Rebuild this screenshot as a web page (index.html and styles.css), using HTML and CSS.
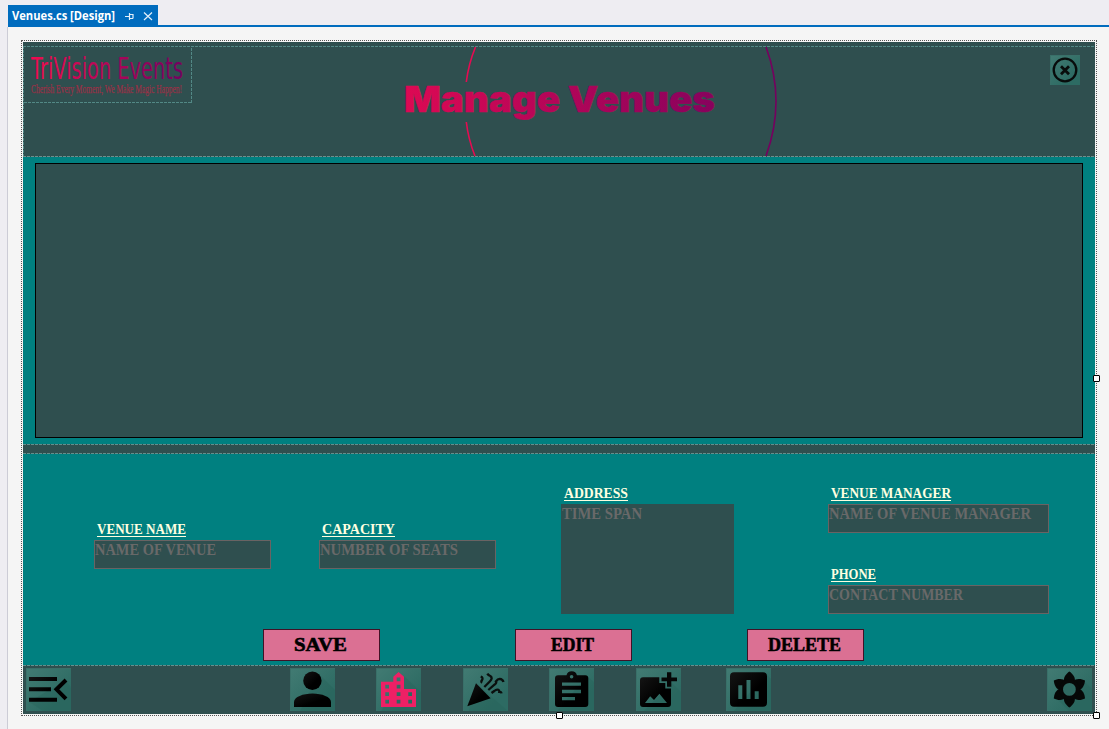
FILE: index.html
```html
<!DOCTYPE html>
<html lang="en">
<head>
<meta charset="utf-8">
<title>Venues.cs [Design]</title>
<link rel="stylesheet" href="styles.css">
</head>
<body>
<svg class="defs" width="0" height="0" aria-hidden="true">
  <defs>
    <linearGradient id="title" gradientUnits="userSpaceOnUse" x1="400" y1="0" x2="780" y2="0"><stop offset="0" stop-color="#de0953"/><stop offset="1" stop-color="#76005f"/></linearGradient>
    <linearGradient id="brand" gradientUnits="userSpaceOnUse" x1="8" y1="0" x2="160" y2="0"><stop offset="0" stop-color="#f00b50"/><stop offset="1" stop-color="#740061"/></linearGradient>
    <linearGradient id="ink" x1="0" y1="0" x2="1" y2="1"><stop offset="0" stop-color="#141414"/><stop offset=".6" stop-color="#000"/></linearGradient>
  </defs>
</svg>
<nav class="tabs">
  <div class="tab">
    <svg width="150" height="20" viewBox="8 5 150 20">
      <text class="tab-name" x="12" y="20" textLength="103" lengthAdjust="spacingAndGlyphs">Venues.cs [Design]</text>
      <path class="tab-icon" d="M125 16.5h4M129.5 13v7M129.5 14.5h3.5v4M129.5 18.5h3.5"/>
      <path class="tab-icon" d="M144 12.500l8 7.500M152 12.500l-8 7.500"/>
    </svg>
  </div>
</nav>
<main class="surface">
  <div class="selection">
    <div class="form">
      <header class="header">
        <div class="brand">
          <svg width="167" height="55" viewBox="0 0 167 55">
            <text class="brand-name" x="7" y="31.500" textLength="152" lengthAdjust="spacingAndGlyphs">TriVision Events</text>
            <text class="brand-tag" x="7" y="46" textLength="151" lengthAdjust="spacingAndGlyphs">Cherish Every Moment, We Make Magic Happen!</text>
          </svg>
        </div>
        <svg class="title" width="400" height="109" viewBox="390 47 400 109">
          <path class="arc start" d="M475.500 47Q468.500 64 466.300 82M466.300 122Q468.500 140 475 156"/>
          <path class="arc end" d="M766 47Q786 101 766 156"/>
          <text class="title-text" x="404" y="112" textLength="311" lengthAdjust="spacingAndGlyphs">Manage Venues</text>
        </svg>
        <div class="tile close"><svg width="30" height="30" fill="none" stroke="#080c0b"><circle cx="15" cy="15" r="11.300" stroke-width="2.300"/><path d="M11 11.200l8 8M19 11.200l-8 8" stroke-width="2.800"/></svg></div>
      </header>
      <section class="list"><div class="grid-view"></div></section>
      <div class="divider"></div>
      <section class="details">
        <div class="fields">
          <div class="field low">
            <svg class="label" width="177" height="20"><text x="3" y="14" textLength="89" lengthAdjust="spacingAndGlyphs">VENUE NAME</text><path d="M3 16.500h89"/></svg>
            <div class="box"><svg width="175" height="27"><text x="0" y="14" textLength="121" lengthAdjust="spacingAndGlyphs">NAME OF VENUE</text></svg></div>
          </div>
          <div class="field low">
            <svg class="label" width="177" height="20"><text x="3" y="14" textLength="73" lengthAdjust="spacingAndGlyphs">CAPACITY</text><path d="M3 16.500h73"/></svg>
            <div class="box"><svg width="175" height="27"><text x="0" y="14" textLength="138" lengthAdjust="spacingAndGlyphs">NUMBER OF SEATS</text></svg></div>
          </div>
          <div class="field address">
            <svg class="label" width="173" height="20"><text x="3" y="14" textLength="64" lengthAdjust="spacingAndGlyphs">ADDRESS</text><path d="M3 16.500h64"/></svg>
            <div class="box area"><svg width="171" height="27"><text x="0" y="14" textLength="80" lengthAdjust="spacingAndGlyphs">TIME SPAN</text></svg></div>
          </div>
          <div class="stack">
            <div class="field contact">
              <svg class="label" width="221" height="20"><text x="3" y="14" textLength="120" lengthAdjust="spacingAndGlyphs">VENUE MANAGER</text><path d="M3 16.500h120"/></svg>
              <div class="box"><svg width="219" height="27"><text x="0" y="14" textLength="202" lengthAdjust="spacingAndGlyphs">NAME OF VENUE MANAGER</text></svg></div>
            </div>
            <div class="field contact">
              <svg class="label" width="221" height="20"><text x="3" y="14" textLength="45" lengthAdjust="spacingAndGlyphs">PHONE</text><path d="M3 16.500h45"/></svg>
              <div class="box"><svg width="219" height="27"><text x="0" y="14" textLength="134" lengthAdjust="spacingAndGlyphs">CONTACT NUMBER</text></svg></div>
            </div>
          </div>
        </div>
        <div class="actions">
          <div class="button"><svg width="115" height="30"><text x="30" y="21" textLength="53" lengthAdjust="spacingAndGlyphs">SAVE</text></svg></div>
          <div class="button"><svg width="115" height="30"><text x="35" y="21" textLength="43" lengthAdjust="spacingAndGlyphs">EDIT</text></svg></div>
          <div class="button"><svg width="115" height="30"><text x="20" y="21" textLength="73" lengthAdjust="spacingAndGlyphs">DELETE</text></svg></div>
        </div>
      </section>
      <footer class="toolbar">
        <div class="tile"><svg width="45" height="43"><path class="shade" d="M3 34L17 43H45V20L40 12z"/><path fill="url(#ink)" d="M3 9h28v4H3zM3 19.300h22v4H3zM3 29.700h28v4H3z"/><path d="M40 12L30.500 21.300L40 30.800" fill="none" stroke="#000" stroke-width="4"/></svg></div>
        <div class="tile"><svg width="45" height="43"><path class="shade" d="M29 6L45 22V43H10z"/><g fill="url(#ink)"><circle cx="22.400" cy="12.700" r="9.200"/><path d="M4 39v-5c0-5 9-8.500 18.500-8.500S41 29 41 34v5z"/></g></svg></div>
        <div class="tile"><svg width="45" height="43"><path class="shade" d="M28 8L45 24V43H5z"/><path fill="#ee2065" fill-rule="evenodd" d="M5 39V13.700h12.300v-5L22.600 4 28 8.700V21h12v18zM20.700 9.500h3.700v3.700h-3.700zM9.300 16.700H13v3.700H9.300zM20.700 16.700h3.700v3.700h-3.700zM9.300 24.300H13V28H9.300zM20.700 24.300h3.700V28h-3.700zM32.300 24.300H36V28h-3.700zM9.300 31.700H13v3.700H9.300zM20.700 31.700h3.700v3.700h-3.700zM32.300 31.700H36v3.700h-3.700z"/></svg></div>
        <div class="tile"><svg width="45" height="43"><path class="shade" d="M13 15L45 43H6z"/><path fill="url(#ink)" d="M13 15.300L27.700 30.300 4.300 38.300z"/><path fill="none" stroke="#0a0f0e" stroke-width="2.300" d="M17.700 8.700q3 1 1.200 3.600q-1.200 1.500.2 2.500M24.300 5.700q1 1.700 3 2.300q3 2-.5 5.500L21.300 19M40.500 14q-.8-3-3.800-3.200q-2 0-3.800 2.700q1 1.500-1.200 3L25.300 22M28.500 25l2.800-2q2.200-2 4-1.200q1.200.7 1 2q2 0 2.200 1.500"/></svg></div>
        <div class="tile"><svg width="45" height="43"><path class="shade" d="M38 8L45 14V43H8z"/><path fill="url(#ink)" fill-rule="evenodd" d="M9 7.300h8.500a5.300 5 0 0 1 10.400 0h8.400a3 3 0 0 1 3 3V36a3 3 0 0 1-3 3H9a3 3 0 0 1-3-3V10.300a3 3 0 0 1 3-3zM24.400 8.700a1.800 1.800 0 1 0-3.600 0a1.800 1.800 0 1 0 3.600 0zM13 14.400h19v3.400H13zM13 21.800h19v3.400H13zM13 29h13v3.300H13z"/></svg></div>
        <div class="tile"><svg width="45" height="43"><path class="shade" d="M36 15L45 24V43H8z"/><path fill="url(#ink)" fill-rule="evenodd" d="M7 9.300h16.300v5.700h6v5.500H35V36a3 3 0 0 1-3 3H7a3 3 0 0 1-3-3V12.300a3 3 0 0 1 3-3zM9 35h22l-7.600-9.200L18 32l-3.800-3.800z"/><path fill="#050505" d="M31 4.300h4.300v5.300H41v3.700h-5.700v5.500H31v-5.500h-5.500V9.600H31z"/></svg></div>
        <div class="tile"><svg width="45" height="43"><path class="shade" d="M40 6L45 11V43H8z"/><path fill="url(#ink)" fill-rule="evenodd" d="M8 4.300h29a4 4 0 0 1 4 4v26.500a4 4 0 0 1-4 4H8a4 4 0 0 1-4-4V8.300a4 4 0 0 1 4-4zM12.300 17.300h4V31h-4zM20.500 12h4v19h-4zM28.700 23.300h4V31h-4z"/></svg></div>
        <div class="tile"><svg width="45" height="43"><path class="shade" d="M38 14L45 21V43H22L8 29z"/><g transform="translate(22.400 21.400)" fill="#060807"><path id="petal" d="M-5-7C-7-11.500-3-16 0-18C3-16 7-11.500 5-7z"/><use href="#petal" transform="rotate(60)"/><use href="#petal" transform="rotate(120)"/><use href="#petal" transform="rotate(180)"/><use href="#petal" transform="rotate(240)"/><use href="#petal" transform="rotate(300)"/><circle r="8.300" fill="#2f6961" stroke="#060807" stroke-width="3.800"/></g></svg></div>
      </footer>
    </div>
    <i class="handle east"></i><i class="handle south"></i><i class="handle corner"></i>
  </div>
</main>
</body>
</html>
```
FILE: styles.css
```css
* { box-sizing: border-box; }
body {
  margin: 0;
  width: 1109px;
  height: 729px;
  overflow: hidden;
  background: #eeedf2;
  font-family: "Open Sans", sans-serif;
}
svg { display: block; }
.defs { position: absolute; }

.tabs { height: 27px; margin-left: 8px; padding-top: 5px; border-bottom: 2px solid #006cbe; }
.tab { width: 150px; height: 20px; background: #006cbe; }
.tab-name { font: 700 12px "Open Sans", sans-serif; fill: #fff; }
.tab-icon { fill: none; stroke: #e3effa; stroke-width: 1.2; }

.surface { height: 702px; margin-left: 7px; padding: 13px 0 0 13px; border-left: 1px solid #ccccd6; background: #f5f5f5; }
.selection { position: relative; width: 1076px; height: 676px; padding: 1px; border: 1px dotted #555; }
.form { width: 1072px; height: 672px; padding-top: 4px; background: #2f4f4f; }

.header {
  --dash: #528885;
  display: flex;
  height: 111px;
  padding: 1px 0 1px 1px;
  background:
    repeating-linear-gradient(90deg, var(--dash) 0 3px, transparent 3px 4px) top / 100% 1px no-repeat,
    repeating-linear-gradient(90deg, #6f8f8d 0 3px, transparent 3px 4px) bottom / 100% 1px no-repeat,
    repeating-linear-gradient(0deg, var(--dash) 0 3px, transparent 3px 4px) left / 1px 100% no-repeat;
}
.brand {
  width: 168px;
  height: 56px;
  background:
    repeating-linear-gradient(90deg, var(--dash) 0 3px, transparent 3px 4px) bottom / 100% 1px no-repeat,
    repeating-linear-gradient(0deg, var(--dash) 0 3px, transparent 3px 4px) right / 1px 100% no-repeat;
}
.brand-name { font: 400 30.5px "DejaVu Sans", sans-serif; fill: url(#brand); }
.brand-tag { font: 400 12.5px "Liberation Serif", serif; fill: #973247; stroke: #973247; stroke-width: .25; }
.title { margin-left: 198px; }
.arc { fill: none; stroke-width: 1.6; }
.start { stroke: #e50b52; }
.end { stroke: #76005f; }
.title-text { font: 900 35.5px Inter, sans-serif; fill: url(#title); stroke: url(#title); stroke-width: .5; stroke-linejoin: round; }

.tile { width: 45px; height: 43px; background: linear-gradient(135deg, #427b73, #2d6b63 75%); box-shadow: inset 1px 1px #397069; }
.shade { fill: #255f56; opacity: .32; }
.close { width: 30px; height: 30px; margin: 8px 0 0 260px; }

.list { height: 287px; padding: 6px 12px; background: #008080; }
.grid-view { height: 275px; border: 1px solid #000; background: #2f4f4f; }
.divider {
  height: 10px;
  background:
    repeating-linear-gradient(90deg, #648f8c 0 3px, transparent 3px 4px) top / 100% 1px no-repeat,
    repeating-linear-gradient(90deg, #648f8c 0 3px, transparent 3px 4px) bottom / 100% 1px no-repeat;
}

.details { height: 211px; padding-top: 30px; background: #008080; }
.fields { display: grid; grid-template-columns: 225px 242px 267px 221px; height: 130px; padding-left: 71px; }
.field { width: 177px; }
.low { margin-top: 36px; }
.address { width: 173px; }
.contact { width: 221px; }
.stack { display: flex; flex-direction: column; gap: 32px; }
.label text { font: 700 15px "Liberation Serif", serif; fill: #ffffe0; }
.label path { stroke: #ffffe0; stroke-width: 1; }
.box { height: 29px; border: 1px solid #696363; background: #2f4f4f; }
.box text { font: 700 16.5px "Liberation Serif", serif; fill: #696969; }
.area { height: 110px; border-color: #2f4f4f; }
.actions { display: grid; grid-template-columns: 252px 232px 117px; margin-top: 15px; padding-left: 240px; }
.button { width: 117px; height: 32px; border: 1px solid #421126; background: #db7093; }
.button text { font: 700 19.5px "Liberation Serif", serif; fill: #000; stroke: #000; stroke-width: .6; }

.toolbar {
  display: grid;
  grid-template-columns: 264px 86px 87px 86px 87px 90px 321px 45px;
  height: 49px;
  padding: 3px 0 0 3px;
  background: repeating-linear-gradient(90deg, #648f8c 0 3px, #2f4f4f 3px 4px) top / 100% 1px no-repeat;
}

.handle { position: absolute; width: 7px; height: 7px; border: 1px solid #000; border-radius: 1px; background: #fff; }
.east { top: 334px; right: -4px; }
.south { left: 534px; bottom: -4px; }
.corner { right: -4px; bottom: -4px; }
```
